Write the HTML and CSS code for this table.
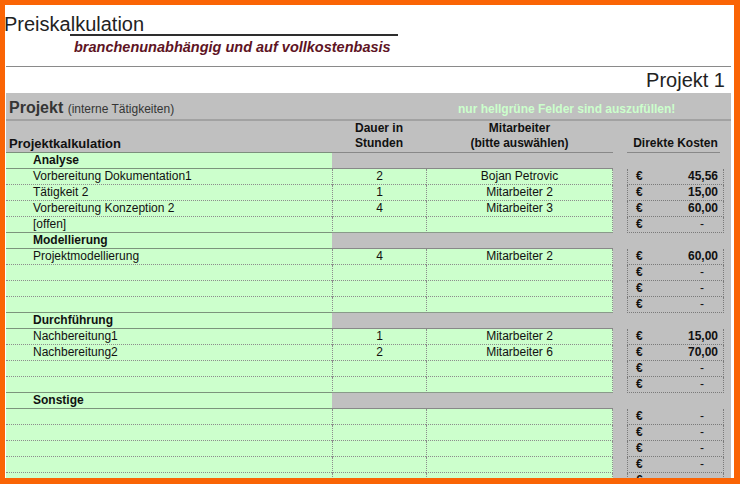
FILE: index.html
```html
<!DOCTYPE html>
<html lang="de">
<head>
<meta charset="utf-8">
<title>Preiskalkulation</title>
<link rel="stylesheet" href="styles.css">
</head>
<body>
<div class="frame">
  <div class="sheet">
    <header class="top">
      <div class="title">Preiskalkulation</div>
      <div class="rule"></div>
      <div class="subtitle">branchenunabhängig und auf vollkostenbasis</div>
    </header>
    <div class="projname">Projekt 1</div>
    <section class="grid">
      <div class="bar">
        <div class="barlabel"><span class="proj">Projekt</span> <span class="projsub">(interne Tätigkeiten)</span></div>
        <div class="note">nur hellgrüne Felder sind auszufüllen!</div>
      </div>
      <div class="sep"></div>
      <div class="head">
        <div class="hc ha">Projektkalkulation</div>
        <div class="hc hb">Dauer in<br>Stunden</div>
        <div class="hc hcc">Mitarbeiter<br>(bitte auswählen)</div>
        <div class="hgap"></div>
        <div class="hc hd">Direkte Kosten</div>
        <div></div>
      </div>

      <div class="group">
        <div class="row sec"><div class="a">Analyse</div><div class="b"></div><div class="c"></div><div class="g"></div><div class="dn"></div><div></div></div>
        <div class="row"><div class="a">Vorbereitung Dokumentation1</div><div class="b">2</div><div class="c">Bojan Petrovic</div><div class="g"></div><div class="d"><span>€</span><span>45,56</span></div><div></div></div>
        <div class="row"><div class="a">Tätigkeit 2</div><div class="b">1</div><div class="c">Mitarbeiter 2</div><div class="g"></div><div class="d"><span>€</span><span>15,00</span></div><div></div></div>
        <div class="row"><div class="a">Vorbereitung Konzeption 2</div><div class="b">4</div><div class="c">Mitarbeiter 3</div><div class="g"></div><div class="d"><span>€</span><span>60,00</span></div><div></div></div>
        <div class="row"><div class="a">[offen]</div><div class="b"></div><div class="c"></div><div class="g"></div><div class="d"><span>€</span><span class="dash">-</span></div><div></div></div>
      </div>

      <div class="group">
        <div class="row sec"><div class="a">Modellierung</div><div class="b"></div><div class="c"></div><div class="g"></div><div class="dn"></div><div></div></div>
        <div class="row"><div class="a">Projektmodellierung</div><div class="b">4</div><div class="c">Mitarbeiter 2</div><div class="g"></div><div class="d"><span>€</span><span>60,00</span></div><div></div></div>
        <div class="row"><div class="a"></div><div class="b"></div><div class="c"></div><div class="g"></div><div class="d"><span>€</span><span class="dash">-</span></div><div></div></div>
        <div class="row"><div class="a"></div><div class="b"></div><div class="c"></div><div class="g"></div><div class="d"><span>€</span><span class="dash">-</span></div><div></div></div>
        <div class="row"><div class="a"></div><div class="b"></div><div class="c"></div><div class="g"></div><div class="d"><span>€</span><span class="dash">-</span></div><div></div></div>
      </div>

      <div class="group">
        <div class="row sec"><div class="a">Durchführung</div><div class="b"></div><div class="c"></div><div class="g"></div><div class="dn"></div><div></div></div>
        <div class="row"><div class="a">Nachbereitung1</div><div class="b">1</div><div class="c">Mitarbeiter 2</div><div class="g"></div><div class="d"><span>€</span><span>15,00</span></div><div></div></div>
        <div class="row"><div class="a">Nachbereitung2</div><div class="b">2</div><div class="c">Mitarbeiter 6</div><div class="g"></div><div class="d"><span>€</span><span>70,00</span></div><div></div></div>
        <div class="row"><div class="a"></div><div class="b"></div><div class="c"></div><div class="g"></div><div class="d"><span>€</span><span class="dash">-</span></div><div></div></div>
        <div class="row"><div class="a"></div><div class="b"></div><div class="c"></div><div class="g"></div><div class="d"><span>€</span><span class="dash">-</span></div><div></div></div>
      </div>

      <div class="group">
        <div class="row sec"><div class="a">Sonstige</div><div class="b"></div><div class="c"></div><div class="g"></div><div class="dn"></div><div></div></div>
        <div class="row"><div class="a"></div><div class="b"></div><div class="c"></div><div class="g"></div><div class="d"><span>€</span><span class="dash">-</span></div><div></div></div>
        <div class="row"><div class="a"></div><div class="b"></div><div class="c"></div><div class="g"></div><div class="d"><span>€</span><span class="dash">-</span></div><div></div></div>
        <div class="row"><div class="a"></div><div class="b"></div><div class="c"></div><div class="g"></div><div class="d"><span>€</span><span class="dash">-</span></div><div></div></div>
        <div class="row"><div class="a"></div><div class="b"></div><div class="c"></div><div class="g"></div><div class="d"><span>€</span><span class="dash">-</span></div><div></div></div>
        <div class="row"><div class="a"></div><div class="b"></div><div class="c"></div><div class="g"></div><div class="d"><span>€</span><span class="dash">-</span></div><div></div></div>
      </div>
    </section>
  </div>
</div>
</body>
</html>
```
FILE: styles.css
```css
html, body {
  margin: 0;
  padding: 0;
  background: #ffffff;
}

.frame {
  width: 740px;
  height: 484px;
  box-sizing: border-box;
  border-style: solid;
  border-color: #fa6405;
  border-width: 5px 6px 6px 5px;
}

.sheet {
  height: 100%;
  box-sizing: border-box;
  overflow: hidden;
  background: #ffffff;
  padding: 0 3px 0 1px;
  font-family: "Liberation Sans", Arial, sans-serif;
  color: #111111;
}

/* ---------- top area ---------- */
.top {
  height: 62px;
  box-sizing: border-box;
  border-bottom: 1px solid #8a8a8a;
}

.title {
  padding-top: 8px;
  margin-left: -2px;
  font-size: 20px;
  line-height: 22px;
  color: #222222;
}

.rule {
  margin: -1px 0 0 64px;
  width: 328px;
  height: 2px;
  background: #2e2e2e;
}

.subtitle {
  margin: 3px 0 0 68px;
  font-size: 14.5px;
  line-height: 17px;
  font-weight: bold;
  font-style: italic;
  color: #5e1424;
}

.projname {
  height: 26px;
  box-sizing: border-box;
  padding: 1px 6px 0 0;
  text-align: right;
  font-size: 20px;
  line-height: 25px;
  color: #222222;
}

/* ---------- grey table area ---------- */
.grid {
  background: #c0c0c0;
  height: 400px;
}

.bar {
  display: grid;
  grid-template-columns: 452px 1fr;
  align-items: baseline;
  height: 26px;
  box-sizing: border-box;
  padding-top: 6px;
}

.barlabel {
  padding-left: 3px;
  color: #353535;
  line-height: 18px;
}

.proj {
  font-size: 16px;
  font-weight: bold;
}

.projsub {
  font-size: 12px;
}

.note {
  font-size: 12px;
  font-weight: bold;
  color: #ccffcc;
}

.sep {
  height: 2px;
  background: #a2a2a2;
}

.head,
.row {
  display: grid;
  grid-template-columns: 326px 94px 187px 14px 97px 1fr;
}

.head {
  height: 32px;
}

.hc {
  display: flex;
  flex-direction: column;
  justify-content: flex-end;
  font-weight: bold;
  font-size: 12px;
  line-height: 15px;
  text-align: center;
  color: #111111;
  border-bottom: 1px solid #888888;
  padding-bottom: 1px;
}

.ha {
  text-align: left;
  padding-left: 3px;
  font-size: 13px;
  border-bottom-color: #7c8f7c;
}

.hd {
  margin-right: 4px;
  padding-left: 4px;
}

/* ---------- rows ---------- */
.row {
  height: 16px;
  font-size: 12px;
  line-height: 15px;
}

.row > div {
  box-sizing: border-box;
  white-space: nowrap;
}

.a,
.b,
.c {
  background: #ccffcc;
  border-bottom: 1px dotted #8c8c8c;
}

.a {
  padding-left: 27px;
}

.b,
.c {
  text-align: center;
  border-left: 1px dotted #8c8c8c;
}

.c {
  border-right: 1px dotted #8c8c8c;
}

.d {
  display: flex;
  justify-content: space-between;
  padding: 0 5px 0 8px;
  font-weight: bold;
  border-left: 1px dotted #7a7a7a;
  border-right: 1px dotted #7a7a7a;
  border-bottom: 1px dotted #7a7a7a;
}

.dash {
  font-weight: normal;
  margin-right: 14px;
}

/* section header rows */
.sec .a {
  font-weight: bold;
  border-bottom: 1px solid #7c947c;
}

.sec .b,
.sec .c {
  background: transparent;
  border-left: 0;
  border-right: 0;
  border-bottom: 1px solid #888888;
}

/* last item row of each group closes with a solid line */
.group .row:last-child .a {
  border-bottom: 1px solid #7c947c;
}

.group .row:last-child .b,
.group .row:last-child .c {
  border-bottom: 1px solid #8a9a8a;
}
```
